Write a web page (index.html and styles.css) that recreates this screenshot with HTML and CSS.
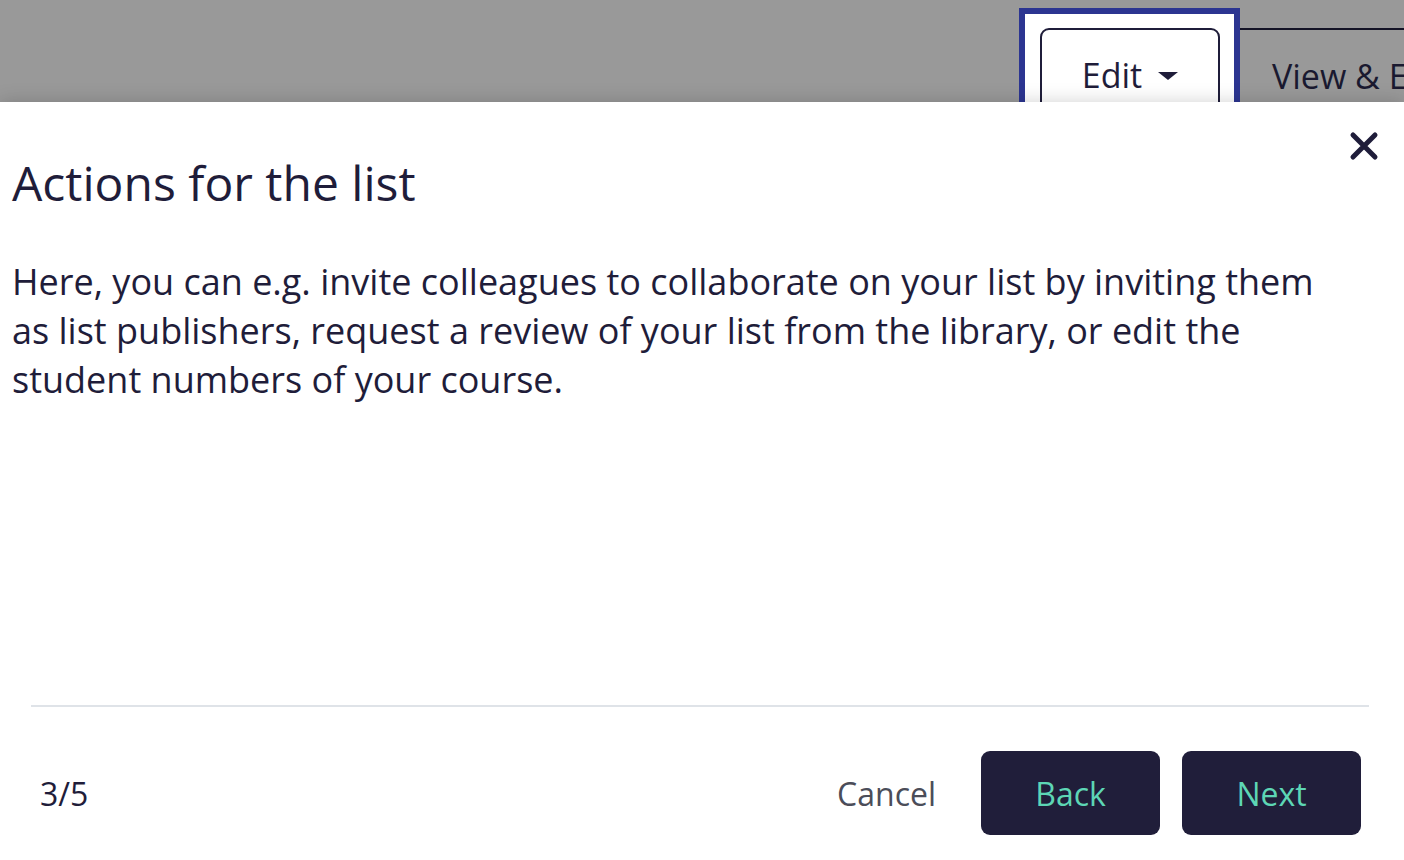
FILE: index.html
```html
<!doctype html>
<html lang="en">
  <head>
    <meta charset="UTF-8" />
    <meta name="viewport" content="width=device-width, initial-scale=1.0" />
    <title>Actions for the list</title>
    <link rel="stylesheet" href="styles.css">
  </head>
  <body>
    <div class="toolbar">
      <div class="spotlight">
        <button class="tool-btn">Edit <span class="caret"></span></button>
      </div>
      <button class="tool-btn dimmed">View &amp; Export</button>
    </div>

    <div class="tour-dialog">
      <button class="close-btn" aria-label="Close">
        <svg width="30" height="30" viewBox="0 0 30 30">
          <path d="M4 4 L26 26 M26 4 L4 26" stroke="#1f1d3a" stroke-width="5" stroke-linecap="round" />
        </svg>
      </button>
      <h1 class="tour-title">Actions for the list</h1>
      <p class="tour-text">
        Here, you can e.g. invite colleagues to collaborate on your list by inviting them
        as list publishers, request a review of your list from the library, or edit the
        student numbers of your course.
      </p>

      <div class="tour-footer">
        <span class="step">3/5</span>
        <div class="actions">
          <button class="link-btn">Cancel</button>
          <button class="primary-btn">Back</button>
          <button class="primary-btn">Next</button>
        </div>
      </div>
    </div>
  </body>
</html>
```

FILE: styles.css
```css
body {
  margin: 0;
  background-color: #999999;
  font-family: "Open Sans", sans-serif;
  color: #1f1d3a;
  height: 860px;
  overflow: hidden;
  display: flex;
  flex-direction: column;
}
button {
  font-family: inherit;
  cursor: pointer;
}
.toolbar {
  height: 102px;
  flex-shrink: 0;
  display: flex;
  align-items: flex-start;
  overflow: hidden;
  padding-top: 8px;
  box-sizing: border-box;
}
.spotlight {
  flex-shrink: 0;
  margin-left: 1019px;
  background-color: #ffffff;
  border: 6px solid #2c3591;
  padding: 14px 14px 0 15px;
  height: 140px;
}
.tool-btn {
  font-size: 34px;
  color: #1f1d3a;
  background: #ffffff;
  border: 2px solid #1f1d3a;
  border-radius: 9px;
  height: 120px;
  padding: 0 0 26px 0;
  width: 180px;
  display: flex;
  align-items: center;
  justify-content: center;
  gap: 16px;
}
.caret {
  border-left: 10px solid transparent;
  border-right: 10px solid transparent;
  border-top: 8px solid #1f1d3a;
  margin-top: 2px;
}
.tool-btn.dimmed {
  margin-top: 20px;
  background: transparent;
  color: #1a1930;
  border-radius: 0;
  border-width: 2px 0 0 0;
  border-color: #141326;
  width: auto;
  white-space: nowrap;
  padding: 0 0 26px 32px;
  justify-content: flex-start;
  flex-shrink: 0;
}
.tour-dialog {
  position: relative;
  z-index: 1;
  flex-grow: 1;
  background-color: #ffffff;
  box-shadow: 0 0 18px rgba(0, 0, 0, 0.18);
  display: flex;
  flex-direction: column;
  padding: 0 35px 0 12px;
}
.close-btn {
  position: absolute;
  top: 29px;
  right: 25px;
  background: none;
  border: none;
  padding: 0;
  width: 30px;
  height: 30px;
}
.tour-title {
  font-size: 48px;
  font-weight: 400;
  margin: 47px 0 0 0;
  line-height: 68px;
}
.tour-text {
  font-size: 36px;
  line-height: 49px;
  margin: 40px 0 0 0;
  max-width: 1320px;
}
.tour-footer {
  margin-top: auto;
  margin-left: 19px;
  border-top: 2px solid #dfe3e8;
  height: 155px;
  box-sizing: border-box;
  display: flex;
  align-items: center;
  justify-content: space-between;
  padding: 19px 8px 0 9px;
}
.step {
  font-size: 32px;
}
.actions {
  display: flex;
  align-items: center;
  gap: 22px;
}
.link-btn {
  background: none;
  border: none;
  font-size: 32px;
  color: #4b4d59;
  padding: 0;
  margin-right: 23px;
}
.primary-btn {
  background-color: #201e3a;
  color: #5dd6b5;
  border: none;
  border-radius: 9px;
  font-size: 32px;
  width: 179px;
  height: 84px;
}
```
